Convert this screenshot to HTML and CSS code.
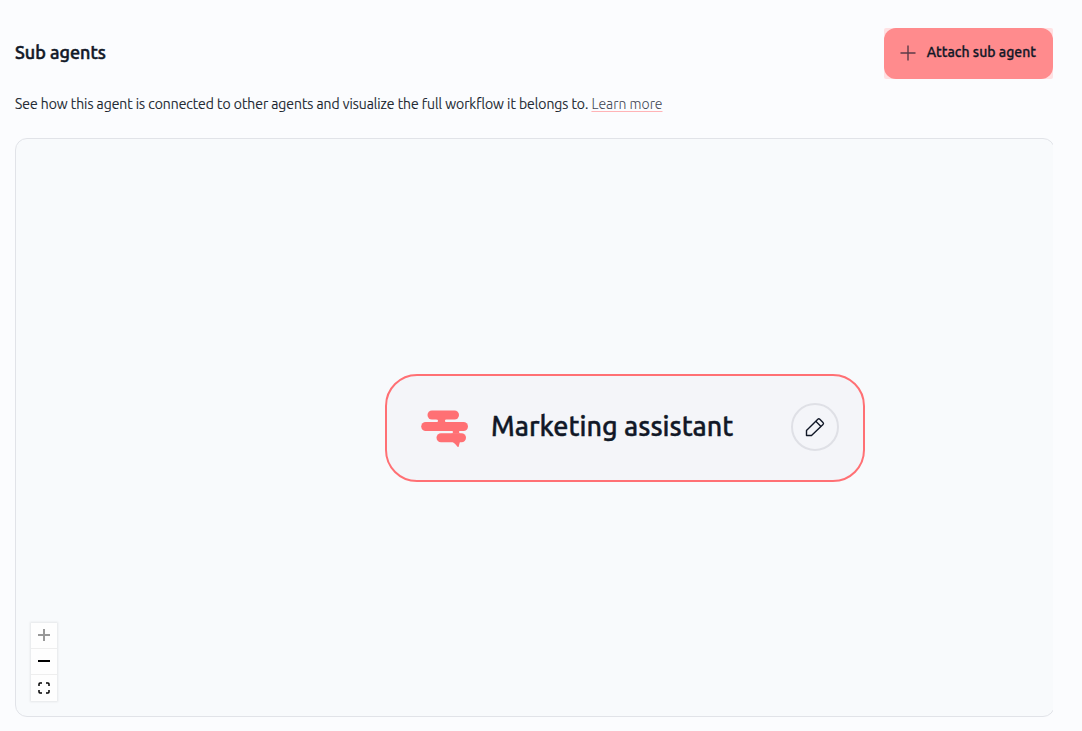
FILE: index.html
```html
<!DOCTYPE html>
<html lang="en">
<head>
<meta charset="utf-8">
<meta name="viewport" content="width=device-width, initial-scale=1">
<title>Sub agents</title>
<link rel="stylesheet" href="styles.css">
</head>
<body>
<main class="page">
  <header class="header">
    <h1 class="title">Sub agents</h1>
    <div class="attach-wrap">
      <button class="attach" type="button">
        <svg class="attach-icon" viewBox="0 0 16 16" aria-hidden="true"><path d="M8 .5v15M.5 8h15"/></svg>
        <span class="attach-label">Attach sub agent</span>
      </button>
    </div>
  </header>
  <p class="intro">See how this agent is connected to other agents and visualize the full workflow it belongs to. <a class="more" href="#learn">Learn more</a></p>
  <section class="viewport" aria-label="Agent workflow">
    <div class="canvas">
      <article class="node">
        <svg class="logo" viewBox="0 0 48 42" aria-hidden="true">
          <rect x="7.500" y="4.500" width="31.500" height="9" rx="4.500"/>
          <rect x="1.200" y="16" width="46.800" height="9" rx="4.500"/>
          <rect x="16.500" y="27.200" width="29.500" height="9" rx="4.500"/>
          <path d="M16 13q2 0 2 1.700T16 17h11q-2 0-2-2.300T27 13zM31 24.500q2 0 2 1.500t-2 1.700h10q-2 0-2-1.700t2-1.500zM31.500 35.500q2 .5 6 5.200.8.800 1.200-.2l1.300-5z"/>
        </svg>
        <h2 class="name">Marketing assistant</h2>
        <button class="edit" type="button" aria-label="Edit agent">
          <svg class="edit-icon" viewBox="0 0 22 22" aria-hidden="true"><path d="M2.500 19.500v-5L13.800 3.200q1-1 2 0l3.200 3.200q1 1 0 2L7.500 19.500zM11.800 5.200l5.200 5.200"/></svg>
        </button>
      </article>
      <div class="controls">
        <button class="control" type="button" aria-label="Zoom in" disabled><svg viewBox="0 0 12 12" aria-hidden="true"><path d="M6 0v12M0 6h12"/></svg></button>
        <button class="control" type="button" aria-label="Zoom out"><svg viewBox="0 0 12 12" aria-hidden="true"><path d="M0 6h12"/></svg></button>
        <button class="control" type="button" aria-label="Fit view"><svg class="fit" viewBox="0 0 12 12" aria-hidden="true"><path d="M1 4V2q0-1 1-1h2M8 1h2q1 0 1 1v2M11 8v2q0 1-1 1H8M4 11H2q-1 0-1-1V8"/></svg></button>
      </div>
    </div>
  </section>
</main>
</body>
</html>
```
FILE: styles.css
```css
* { box-sizing: border-box; }
body {
  margin: 0;
  background: #fbfcfe;
  color: #111827;
  font-family: Ubuntu, "Noto Sans", sans-serif;
}
button { font: inherit; color: inherit; cursor: pointer; }
svg { fill: none; stroke: currentColor; }
.page {
  display: flex;
  flex-direction: column;
  min-height: 100vh;
  padding: 28px 29px 14px 15px;
}
.header {
  display: flex;
  align-items: center;
  justify-content: space-between;
}
.title {
  margin: 0;
  padding-bottom: 4px;
  font-size: 18px;
  line-height: 24px;
  font-weight: 500;
  -webkit-text-stroke: 0.5px currentColor;
}
.attach-wrap { background: #ffe1e3; border-radius: 2px; }
.attach {
  display: flex;
  align-items: center;
  gap: 11px;
  height: 51px;
  padding: 0 17px 2px 16px;
  border: 0;
  border-radius: 12px;
  background: #ff8b8d;
  font-size: 14px;
  font-weight: 500;
  -webkit-text-stroke: 0.3px currentColor;
}
.attach-label { padding-bottom: 2px; }
.attach-icon { width: 16px; height: 16px; stroke: #5c3b47; stroke-width: 1.4; }
.intro {
  margin: 15px 0 24px;
  font-size: 14px;
  font-weight: 300;
  line-height: 20px;
  -webkit-text-stroke: 0.2px currentColor;
}
.more {
  color: #3f4553;
  text-decoration: underline 1px #ffb3b6;
  text-underline-offset: 2px;
  -webkit-text-stroke: 0;
}
.viewport {
  display: flex;
  flex: 1;
  overflow: hidden;
}
.canvas {
  position: relative;
  flex: 1 0 auto;
  min-height: 320px;
  margin-right: -2px;
  border: 1px solid #e1e3e8;
  border-radius: 12px;
  background: #f8fafc;
}
.node {
  position: absolute;
  left: 369px;
  top: calc(50% - 54px);
  display: flex;
  align-items: center;
  width: 480px;
  height: 108px;
  padding: 0 24px 2px 33px;
  border: 2px solid #ff7074;
  border-radius: 32px;
  background: #f4f5f9;
}
.logo { width: 48px; height: 42px; fill: #ff7074; stroke: none; }
.name {
  flex: 1;
  margin: 0 0 0 23px;
  padding-bottom: 2px;
  font-size: 27px;
  line-height: 36px;
  font-weight: 500;
  -webkit-text-stroke: 0.4px currentColor;
  white-space: nowrap;
}
.edit {
  display: grid;
  place-items: center;
  width: 48px;
  height: 48px;
  padding: 0;
  border: 2px solid #dfe0e6;
  border-radius: 50%;
  background: transparent;
}
.edit-icon { width: 22px; height: 22px; stroke-width: 1.4; stroke-linejoin: round; }
.controls {
  position: absolute;
  left: 15px;
  bottom: 15px;
  width: 26px;
  box-shadow: 0 0 2px 1px rgba(0, 0, 0, 0.08);
}
.control {
  display: grid;
  place-items: center;
  width: 26px;
  height: 26px;
  padding: 0 0 1px;
  border: 0;
  border-bottom: 1px solid #eee;
  background: #fefefe;
  color: #000;
}
.control:last-child { border-bottom: 0; }
.control:disabled { color: #999; }
.control svg { width: 12px; height: 12px; stroke-width: 2; }
.control .fit { stroke-width: 1.5; }
```
